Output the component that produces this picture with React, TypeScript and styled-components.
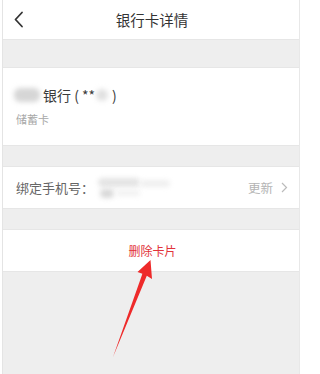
import React from "react";
import styled, { createGlobalStyle } from "styled-components";

const Global = createGlobalStyle`
  html, body { margin: 0; padding: 0; background: #ffffff; }
  body { font-family: "Noto Sans CJK SC", "Noto Sans", sans-serif; }
`;

const Page = styled.div`
  position: relative;
  width: 301px;
  height: 374px;
  overflow: hidden;
  background: #ffffff;
  padding: 0 1px 0 2px;
  box-sizing: border-box;
`;

const Screen = styled.div`
  height: 100%;
  background: #eeeeee;
  border-left: 1px solid #e4e4e4;
  border-right: 1px solid #e8e8e8;
  display: flex;
  flex-direction: column;
`;

const Header = styled.div`
  height: 40px;
  background: #fff;
  display: flex;
  align-items: center;
  justify-content: center;
  position: relative;
  border-bottom: 1px solid #e6e6e6;
  box-sizing: border-box;
  flex-shrink: 0;
`;

const Back = styled.button`
  position: absolute;
  left: 6px;
  top: 9px;
  width: 20px;
  height: 20px;
  padding: 0;
  border: none;
  background: transparent;
  display: flex;
  align-items: center;
  justify-content: center;
`;

const Title = styled.div`
  font-size: 14.5px;
  color: #333;
  margin-left: 2px;
  margin-top: -1px;
`;

const Gap = styled.div<{ $h: number }>`
  height: ${(p) => p.$h}px;
  flex-shrink: 0;
`;

const Section = styled.div<{ $h: number }>`
  height: ${(p) => p.$h}px;
  background: #fff;
  border-top: 1px solid #e6e6e6;
  border-bottom: 1px solid #e6e6e6;
  box-sizing: border-box;
  flex-shrink: 0;
`;

const CardBody = styled.div`
  padding: 16px 0 0 11px;
  display: flex;
  flex-direction: column;
  gap: 5px;
`;

const BankLine = styled.div`
  display: flex;
  align-items: center;
  font-size: 14px;
  color: #3a3a3a;
  height: 22px;
`;

const Blur = styled.span<{ $w: number; $h: number; $c?: string }>`
  display: inline-block;
  width: ${(p) => p.$w}px;
  height: ${(p) => p.$h}px;
  background: ${(p) => p.$c || "#d6d6d6"};
  border-radius: 6px;
  filter: blur(2.5px);
`;

const CardType = styled.div`
  font-size: 11px;
  color: #a8a8a8;
  padding-left: 2px;
`;

const Row = styled.div`
  height: 100%;
  display: flex;
  align-items: center;
  padding: 0 11px 0 11px;
`;

const Label = styled.span`
  font-size: 13px;
  color: #666;
  margin-left: 2px;
`;

const PhoneBlur = styled.div`
  position: relative;
  margin-left: 4px;
  width: 75px;
  height: 22px;
`;

const Spacer = styled.div`
  flex: 1;
`;

const Update = styled.span`
  font-size: 12.5px;
  color: #b4b4b4;
  margin-right: 8px;
`;

const Delete = styled.div`
  height: 100%;
  display: flex;
  align-items: center;
  justify-content: center;
  font-size: 12px;
  color: #e2333a;
  padding-left: 3px;
`;

const Arrow = styled.svg`
  position: absolute;
  left: 0;
  top: 0;
  pointer-events: none;
`;

export default function App() {
  return (
    <>
      <Global />
      <Page>
        <Screen>
          <Header>
            <Back aria-label="back">
              <svg width="12" height="17" viewBox="0 0 12 17">
                <path d="M9 1.5 L2.5 8.5 L9 15.5" fill="none" stroke="#333" strokeWidth="1.8" strokeLinecap="round" strokeLinejoin="round" />
              </svg>
            </Back>
            <Title>银行卡详情</Title>
          </Header>
          <Gap $h={27} />
          <Section $h={79}>
            <CardBody>
              <BankLine>
                <Blur $w={26} $h={14} style={{ marginRight: 3 }} />
                <span>银行 ( **</span>
                <Blur $w={12} $h={12} $c="#e0e0e0" style={{ margin: "0 4px 0 1px" }} />
                <span>)</span>
              </BankLine>
              <CardType>储蓄卡</CardType>
            </CardBody>
          </Section>
          <Gap $h={20} />
          <Section $h={43}>
            <Row>
              <Label>绑定手机号：</Label>
              <PhoneBlur>
                <Blur $w={42} $h={9} $c="#e4e4e4" style={{ position: "absolute", left: 0, top: 1 }} />
                <Blur $w={14} $h={9} $c="#d8d8d8" style={{ position: "absolute", left: 2, top: 12 }} />
                <Blur $w={30} $h={7} $c="#efefef" style={{ position: "absolute", left: 42, top: 3 }} />
                <Blur $w={24} $h={6} $c="#f1f1f1" style={{ position: "absolute", left: 18, top: 13 }} />
              </PhoneBlur>
              <Spacer />
              <Update>更新</Update>
              <svg width="7" height="11" viewBox="0 0 7 11">
                <path d="M1 1 L5.5 5.5 L1 10" fill="none" stroke="#bbb" strokeWidth="1.2" />
              </svg>
            </Row>
          </Section>
          <Gap $h={20} />
          <Section $h={43}>
            <Delete>删除卡片</Delete>
          </Section>
        </Screen>
        <Arrow width="301" height="374" viewBox="0 0 301 374">
          <polygon
            points="150.5,260 152,279 146.8,275.8 113,357 142.4,273.8 137.5,272"
            fill="#ee2a2a"
          />
        </Arrow>
      </Page>
    </>
  );
}
